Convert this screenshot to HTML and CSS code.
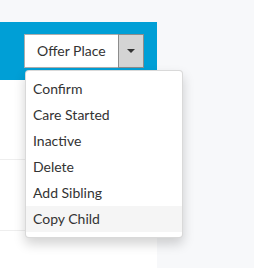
FILE: index.html
```html
<!DOCTYPE html>
<html lang="en">
<head>
  <meta charset="UTF-8">
  <title>Child Status</title>
  <link rel="stylesheet" href="styles.css">
</head>
<body>
  <div class="panel">
    <!-- HEADER BAR -->
    <div class="panel-header">
      <div class="btn-group">
        <button class="btn">Offer Place</button>
        <button class="btn btn-toggle"><span class="caret"></span></button>

        <!-- STATUS MENU -->
        <ul class="dropdown-menu">
          <li><a>Confirm</a></li>
          <li><a>Care Started</a></li>
          <li><a>Inactive</a></li>
          <li><a>Delete</a></li>
          <li><a>Add Sibling</a></li>
          <li class="hover"><a>Copy Child</a></li>
        </ul>
      </div>
    </div>
    <div class="panel-row row-tall"></div>
    <div class="panel-row row-mid"></div>
    <div class="panel-row"></div>
  </div>
</body>
</html>
```

FILE: styles.css
```css
/* Reset & Body Setup */
* {
  margin: 0;
  padding: 0;
  box-sizing: border-box;
}
body {
  font-family: Lato, 'Open Sans', sans-serif;
  font-size: 14px;
  line-height: 20px;
  color: #333;
  background-color: #f7f8fa;
  min-height: 100vh;
}
.panel {
  width: 157px;
  margin-top: 22px;
  min-height: 246px;
  background-color: #fff;
}
/* Blue header with the status button */
.panel-header {
  height: 58px;
  padding: 12px 0 0 24px;
  background-color: #009fd6;
}
.btn-group {
  position: relative;
  display: flex;
}
.btn {
  font-family: inherit;
  font-size: 14px;
  line-height: 20px;
  color: #333;
  background-color: #fff;
  border: 1px solid #adadad;
  padding: 6px 12px;
  height: 34px;
}
.btn-toggle {
  width: 26px;
  padding: 0;
  margin-left: -1px;
  background-color: #d4d4d4;
  border-color: #8c8c8c;
  display: flex;
  align-items: center;
  justify-content: center;
}
.caret {
  width: 0;
  height: 0;
  border-top: 4px solid #333;
  border-left: 4px solid transparent;
  border-right: 4px solid transparent;
}
/* DROPDOWN MENU */
.dropdown-menu {
  position: absolute;
  top: 36px;
  left: 1px;
  width: 158px;
  list-style: none;
  padding: 5px 0;
  background-color: #fff;
  border: 1px solid rgba(0,0,0,0.15);
  border-radius: 4px;
  box-shadow: 0 6px 12px rgba(0,0,0,0.175);
  z-index: 10;
}
.dropdown-menu a {
  display: block;
  padding: 3px 7px;
  white-space: nowrap;
  cursor: pointer;
}
.dropdown-menu li.hover a,
.dropdown-menu a:hover {
  background-color: #f5f5f5;
}
/* Rows under the header */
.panel-row {
  border-bottom: 1px solid #eee;
}
.row-tall {
  height: 80px;
}
.row-mid {
  height: 71px;
}
.panel-row:last-child {
  border-bottom: none;
}
```
